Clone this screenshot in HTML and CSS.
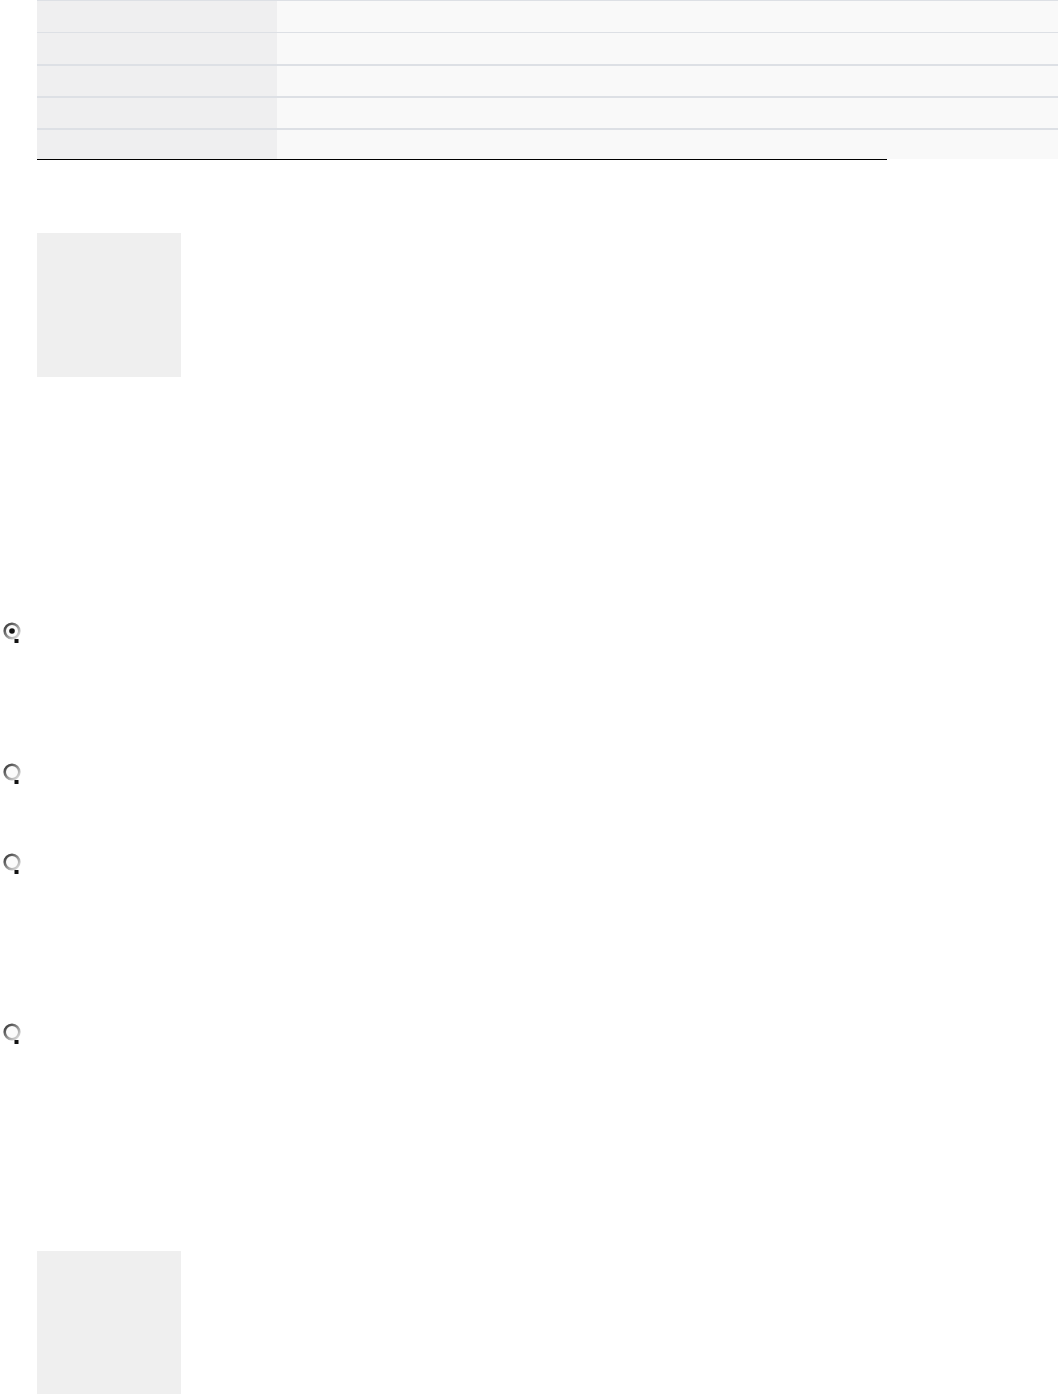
FILE: index.html
```html
<!DOCTYPE html>
<html lang="en">
<head>
<meta charset="utf-8">
<title>Form</title>
<link rel="stylesheet" href="styles.css">
</head>
<body>
<div class="page">
  <div class="table-wrap">
    <div class="table">
      <div class="row row-a"><div class="cell-label"></div><div class="cell-value"></div></div>
      <div class="row row-a"><div class="cell-label"></div><div class="cell-value"></div></div>
      <div class="row row-b"><div class="cell-label"></div><div class="cell-value"></div></div>
      <div class="row row-b"><div class="cell-label"></div><div class="cell-value"></div></div>
      <div class="row row-b row-last"><div class="cell-label"></div><div class="cell-value"></div></div>
    </div>
    <div class="rule"></div>
  </div>

  <div class="thumb thumb-first"></div>

  <div class="radio radio-1">
    <svg width="22" height="24" viewBox="0 0 22 24">
      <defs>
        <linearGradient id="ring1" x1="0" y1="0" x2="1" y2="1">
          <stop offset="0" stop-color="#2e2e2e"/>
          <stop offset="0.5" stop-color="#8c8c8c"/>
          <stop offset="1" stop-color="#e8e8e8"/>
        </linearGradient>
      </defs>
      <circle cx="10" cy="10" r="7.3" fill="#fbfbfb" stroke="url(#ring1)" stroke-width="2.6"/>
      <circle cx="10" cy="10" r="2.8" fill="#111"/>
      <rect x="12.5" y="18" width="4" height="4" fill="#111"/>
    </svg>
  </div>
  <div class="radio radio-2">
    <svg width="22" height="24" viewBox="0 0 22 24">
      <defs>
        <linearGradient id="ring2" x1="0" y1="0" x2="1" y2="1">
          <stop offset="0" stop-color="#2e2e2e"/>
          <stop offset="0.5" stop-color="#8c8c8c"/>
          <stop offset="1" stop-color="#e8e8e8"/>
        </linearGradient>
      </defs>
      <circle cx="10" cy="10" r="7.3" fill="#fbfbfb" stroke="url(#ring2)" stroke-width="2.6"/>
      <rect x="12.5" y="18" width="4" height="4" fill="#111"/>
    </svg>
  </div>
  <div class="radio radio-3">
    <svg width="22" height="24" viewBox="0 0 22 24">
      <defs>
        <linearGradient id="ring3" x1="0" y1="0" x2="1" y2="1">
          <stop offset="0" stop-color="#2e2e2e"/>
          <stop offset="0.5" stop-color="#8c8c8c"/>
          <stop offset="1" stop-color="#e8e8e8"/>
        </linearGradient>
      </defs>
      <circle cx="10" cy="10" r="7.3" fill="#fbfbfb" stroke="url(#ring3)" stroke-width="2.6"/>
      <rect x="12.5" y="18" width="4" height="4" fill="#111"/>
    </svg>
  </div>
  <div class="radio radio-4">
    <svg width="22" height="24" viewBox="0 0 22 24">
      <defs>
        <linearGradient id="ring4" x1="0" y1="0" x2="1" y2="1">
          <stop offset="0" stop-color="#2e2e2e"/>
          <stop offset="0.5" stop-color="#8c8c8c"/>
          <stop offset="1" stop-color="#e8e8e8"/>
        </linearGradient>
      </defs>
      <circle cx="10" cy="10" r="7.3" fill="#fbfbfb" stroke="url(#ring4)" stroke-width="2.6"/>
      <rect x="12.5" y="18" width="4" height="4" fill="#111"/>
    </svg>
  </div>

  <div class="thumb thumb-last"></div>
</div>
</body>
</html>
```

FILE: styles.css
```css
html, body {
  margin: 0;
  padding: 0;
  background: #ffffff;
  font-family: "Liberation Sans", Arial, sans-serif;
}

.page {
  width: 1058px;
  height: 1394px;
  overflow: hidden;
}

.table-wrap {
  padding-left: 37px;
}

.table {
  display: flex;
  flex-direction: column;
  width: 1021px;
}

.row {
  display: flex;
}

.row-a {
  height: 31px;
  border-top: 1px solid #dde0e5;
}

.row-b {
  height: 30px;
  border-top: 2px solid #dde0e5;
}

.row-last {
  height: 29px;
}

.cell-label {
  width: 240px;
  background: #efeff0;
}

.cell-value {
  flex: 1;
  background: #f9f9f9;
}

.rule {
  width: 850px;
  height: 1px;
  background: #000000;
}

.thumb {
  width: 144px;
  height: 144px;
  margin-left: 37px;
  background: #efefef;
}

.thumb-first {
  margin-top: 73px;
}

.thumb-last {
  margin-top: 205px;
}

.radio {
  margin-left: 2px;
  width: 22px;
  height: 24px;
}

.radio svg {
  display: block;
}

.radio-1 { margin-top: 244px; }
.radio-2 { margin-top: 117px; }
.radio-3 { margin-top: 66px; }
.radio-4 { margin-top: 146px; }
```
